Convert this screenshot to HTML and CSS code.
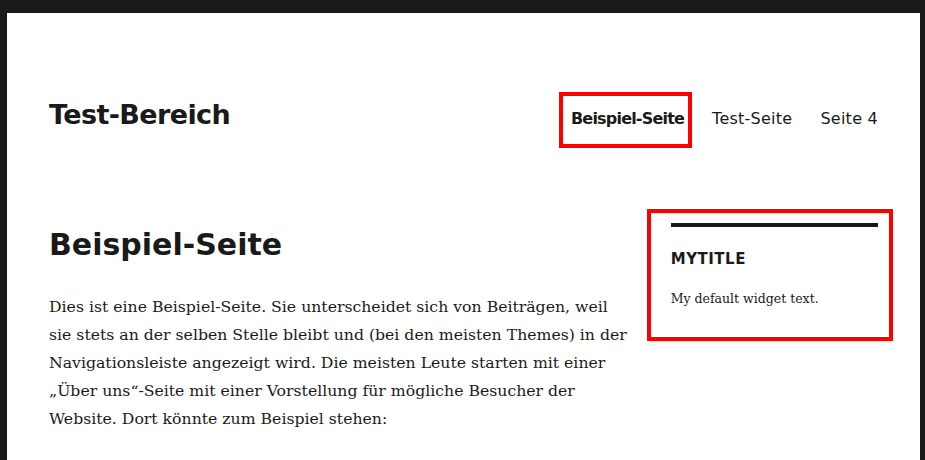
FILE: index.html
```html
<!DOCTYPE html>
<html lang="de">
<head>
<meta charset="utf-8">
<title>Beispiel-Seite – Test-Bereich</title>
<link rel="stylesheet" href="styles.css">
</head>
<body>
<div class="page">
  <header class="site-header">
    <p class="site-title">Test-Bereich</p>
    <nav class="main-nav">
      <a class="nav-item current" href="#">Beispiel-Seite</a>
      <a class="nav-item" href="#">Test-Seite</a>
      <a class="nav-item" href="#">Seite 4</a>
    </nav>
  </header>
  <div class="site-content">
    <main class="content">
      <h1 class="entry-title">Beispiel-Seite</h1>
      <p class="entry-text">Dies ist eine Beispiel-Seite. Sie unterscheidet sich von Beiträgen, weil sie stets an der selben Stelle bleibt und (bei den meisten Themes) in der Navigationsleiste angezeigt wird. Die meisten Leute starten mit einer „Über uns“-Seite mit einer Vorstellung für mögliche Besucher der Website. Dort könnte zum Beispiel stehen:</p>
    </main>
    <aside class="sidebar">
      <section class="widget">
        <h2 class="widget-title">Mytitle</h2>
        <p class="widget-text">My default widget text.</p>
      </section>
    </aside>
  </div>
</div>
</body>
</html>
```
FILE: styles.css
```css
html, body {
  margin: 0;
  padding: 0;
}
body {
  background: #1a1a1a;
  color: #1a1a1a;
  font-family: "DejaVu Sans", sans-serif;
}
.page {
  background: #fff;
  margin: 13px 5px 0 7px;
  min-height: 460px;
  padding: 0 42px;
}
.site-header {
  display: flex;
  justify-content: space-between;
  align-items: baseline;
  padding-top: 85px;
}
.site-title {
  margin: 0;
  font-size: 27px;
  line-height: 34px;
  font-weight: bold;
  letter-spacing: -0.6px;
}
.main-nav {
  display: flex;
  gap: 28px;
}
.nav-item {
  position: relative;
  color: #1a1a1a;
  text-decoration: none;
  font-size: 16px;
  line-height: 24px;
  letter-spacing: 0.25px;
}
.nav-item.current {
  font-weight: bold;
  letter-spacing: -0.8px;
}
.nav-item.current::after {
  content: "";
  position: absolute;
  left: -12px;
  right: -8px;
  top: -15px;
  bottom: -17px;
  border: 4px solid #f00;
}
.site-content {
  display: grid;
  grid-template-columns: 70% 25%;
  justify-content: space-between;
  align-items: start;
  margin-top: 91px;
}
.entry-title {
  margin: 3px 0 0;
  font-size: 30px;
  line-height: 37px;
  font-weight: bold;
}
.entry-text {
  margin: 30px 0 0;
  font-family: "DejaVu Serif", serif;
  font-size: 15.7px;
  line-height: 28px;
}
.widget {
  position: relative;
  border-top: 4px solid #1a1a1a;
}
.widget::after {
  content: "";
  position: absolute;
  left: -24px;
  right: -15px;
  top: -18px;
  bottom: -32px;
  border: 4px solid #f00;
}
.widget-title {
  margin: 23px 0 0;
  font-size: 15px;
  line-height: 18px;
  font-weight: bold;
  text-transform: uppercase;
  letter-spacing: 0.5px;
}
.widget-text {
  margin: 21px 0 0;
  font-family: "DejaVu Serif", serif;
  font-size: 12.5px;
  line-height: 20px;
}
```
